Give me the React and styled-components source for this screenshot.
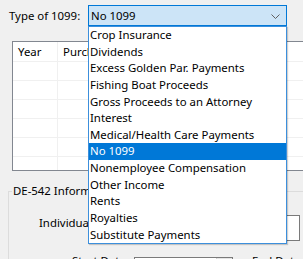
import styled, { createGlobalStyle } from "styled-components";

const Global = createGlobalStyle`
  body {
    margin: 0;
    background: #f0f0f0;
    font-family: "Noto Sans", "Open Sans", sans-serif;
    font-size: 11.4px;
    color: #000;
  }
`;

const Page = styled.div`
  width: 303px;
  height: 259px;
  overflow: hidden;
`;

const TopRow = styled.div`
  display: flex;
  align-items: center;
  padding: 5px 0 0 9px;
`;

const Label = styled.span`
  width: 79px;
  white-space: nowrap;
`;

const Combo = styled.div`
  position: relative;
  box-sizing: border-box;
  width: 199px;
  height: 21px;
  background: #cce4f7;
  border: 1px solid #0078d7;
  display: flex;
  align-items: center;
  padding-left: 2px;
`;

const Chevron = styled.svg`
  position: absolute;
  right: 6px;
  top: 8px;
`;

const Dropdown = styled.ul`
  position: absolute;
  left: -1px;
  top: 20px;
  width: 199px;
  box-sizing: border-box;
  margin: 0;
  padding: 0;
  list-style: none;
  background: #fff;
  border: 1px solid #3c8fdc;
  box-shadow: 1px 1px 1px rgba(0, 0, 0, 0.18);
  z-index: 5;
`;

const Item = styled.li`
  height: 16.65px;
  line-height: 16.65px;
  padding-left: 1px;
  white-space: nowrap;
  background: ${(p) => (p.$active ? "#0078d7" : "transparent")};
  color: ${(p) => (p.$active ? "#fff" : "#000")};
`;

const Grid = styled.div`
  margin: 15px 0 0 12px;
  width: 320px;
  height: 130px;
  box-sizing: border-box;
  border: 1px solid #828790;
  background: #fff;
  overflow: hidden;
`;

const GridRow = styled.div`
  display: flex;
  height: ${(p) => (p.$header ? "20px" : "19px")};
  border-bottom: 1px solid #f0f0f0;
  box-sizing: border-box;
`;

const Cell = styled.div`
  width: ${(p) => p.$w}px;
  flex: none;
  box-sizing: border-box;
  border-right: 1px solid #f0f0f0;
  padding-left: 5px;
  display: flex;
  align-items: center;
  white-space: nowrap;
  overflow: hidden;
`;

const Group = styled.fieldset`
  margin: 13px 0 0 8px;
  width: 320px;
  height: 110px;
  box-sizing: border-box;
  border: 1px solid #dcdcdc;
  padding: 0;
`;

const Legend = styled.legend`
  padding: 0 1px;
  margin-left: 3px;
  line-height: 14px;
`;

const FieldRow = styled.div`
  display: flex;
  align-items: flex-start;
  height: ${(p) => p.$h}px;
  margin-top: ${(p) => p.$mt}px;
`;

const FieldLabel = styled.span`
  margin-left: ${(p) => p.$ml}px;
  margin-top: ${(p) => p.$mt || 0}px;
  width: ${(p) => p.$w}px;
  line-height: 16px;
  flex: none;
  white-space: nowrap;
`;

const TextBox = styled.div`
  box-sizing: border-box;
  height: 26px;
  width: 170px;
  margin-left: 31px;
  background: #fff;
  border: 1px solid #7a7a7a;
`;

const DateBox = styled.div`
  box-sizing: border-box;
  width: 99px;
  height: 22px;
  background: #fff;
  border: 1px solid #7a7a7a;
  display: flex;
  justify-content: flex-end;
  flex: none;
`;

const DateButton = styled.div`
  width: 15px;
  height: 100%;
  background: #e5e5e5;
  border-left: 1px solid #cfcfcf;
`;

const cols = [45, 40, 40, 40, 40, 45, 50, 40];

const types = [
  "Crop Insurance",
  "Dividends",
  "Excess Golden Par. Payments",
  "Fishing Boat Proceeds",
  "Gross Proceeds to an Attorney",
  "Interest",
  "Medical/Health Care Payments",
  "No 1099",
  "Nonemployee Compensation",
  "Other Income",
  "Rents",
  "Royalties",
  "Substitute Payments",
];

export default function App() {
  return (
    <Page>
      <Global />
      <TopRow>
        <Label>Type of 1099:</Label>
        <Combo>
          No 1099
          <Chevron width="9" height="5" viewBox="0 0 9 5">
            <path d="M0.5 0.5 L4.5 4.5 L8.5 0.5" fill="none" stroke="#606060" strokeWidth="1" />
          </Chevron>
          <Dropdown>
            {types.map((t) => (
              <Item key={t} $active={t === "No 1099"}>
                {t}
              </Item>
            ))}
          </Dropdown>
        </Combo>
      </TopRow>
      <Grid>
        <GridRow $header>
          <Cell $w={cols[0]}>Year</Cell>
          <Cell $w={cols[1]}>Purchase</Cell>
          <Cell $w={cols[2]} />
          <Cell $w={cols[3]} />
          <Cell $w={cols[4]} />
          <Cell $w={cols[5]}>Taken</Cell>
          <Cell $w={cols[6]} />
          <Cell $w={cols[7]} />
        </GridRow>
        {[0, 1, 2, 3, 4, 5].map((r) => (
          <GridRow key={r}>
            {cols.map((w, i) => (
              <Cell key={i} $w={w} />
            ))}
          </GridRow>
        ))}
      </Grid>
      <Group>
        <Legend>DE-542 Information</Legend>
        <FieldRow $h={26} $mt={17}>
          <FieldLabel $ml={30} $w={60}>Individual:</FieldLabel>
          <TextBox />
        </FieldRow>
        <FieldRow $h={22} $mt={16}>
          <FieldLabel $ml={63} $mt={-4} $w={62}>Start Date:</FieldLabel>
          <DateBox>
            <DateButton />
          </DateBox>
          <FieldLabel $ml={19} $mt={-4} $w={60}>End Date:</FieldLabel>
        </FieldRow>
      </Group>
    </Page>
  );
}
